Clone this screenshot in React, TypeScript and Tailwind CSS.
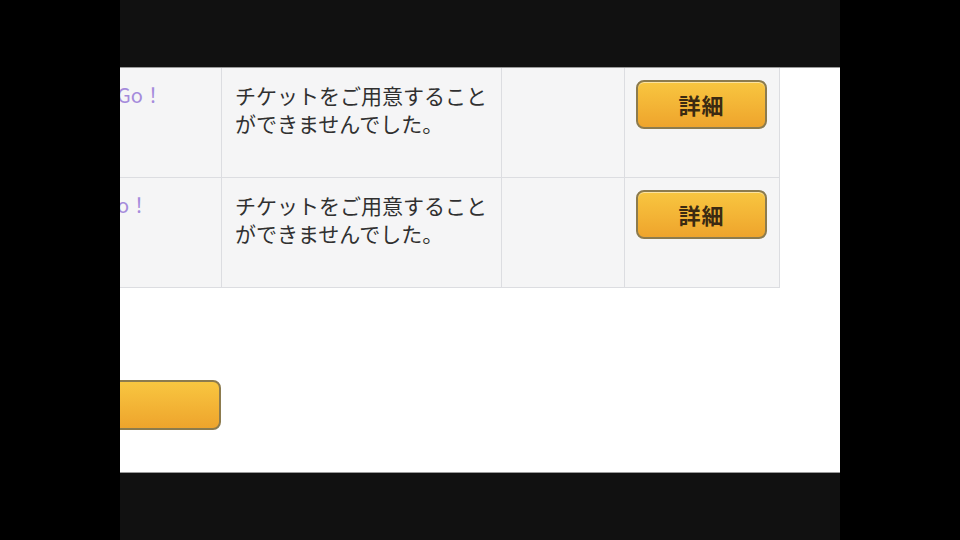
const rows = [
  { name: "Go！", pad: "pr-[58px]" },
  { name: "o！", pad: "pr-[72px]" },
];

const jp = { fontFamily: '"Noto Sans CJK JP", "Noto Sans", sans-serif' };

function DetailButton() {
  return (
    <button
      className="w-[131px] h-[49px] rounded-[8px] border-2 border-[#8c7b4e] bg-gradient-to-b from-[#f8c640] to-[#eea42c] text-[#3b2a12] text-[22px] font-bold tracking-[1px] shadow-[inset_0_1px_0_rgba(255,255,255,0.5)]"
      style={jp}
    >
      詳細
    </button>
  );
}

export default function App() {
  return (
    <div className="w-[960px] h-[540px] bg-black flex justify-center overflow-hidden" style={jp}>
      <div className="w-[720px] h-full bg-[#111111] flex flex-col">
        <div className="h-[67px] shrink-0" />
        <div className="h-[406px] bg-white border-t border-b border-[#9a9a9a] overflow-hidden flex flex-col">
          <div className="w-[660px] border-r border-[#dcdde1]">
            {rows.map((row, i) => (
              <div key={i} className="flex h-[110px] bg-[#f5f5f6] border-b border-[#dcdde1]">
                <div className={`w-[102px] shrink-0 border-r border-[#dcdde1] overflow-hidden flex justify-end pt-[13px] ${row.pad}`}>
                  <span className="whitespace-nowrap text-[20px] leading-[28px] text-[#a58bdc]">{row.name}</span>
                </div>
                <div className="w-[280px] shrink-0 border-r border-[#dcdde1] pl-[13px] pr-[8px] pt-[13px] text-[21px] leading-[28px] text-[#303030]">
                  チケットをご用意することができませんでした。
                </div>
                <div className="w-[123px] shrink-0 border-r border-[#dcdde1]" />
                <div className="flex-1 pl-[11px] pt-[12px]">
                  <DetailButton />
                </div>
              </div>
            ))}
          </div>
          <div className="mt-[92px] flex">
            <div className="w-[111px] h-[50px] -ml-[10px] rounded-[8px] border-2 border-[#8c7b4e] bg-gradient-to-b from-[#f8c640] to-[#eea42c]" />
          </div>
        </div>
      </div>
    </div>
  );
}
